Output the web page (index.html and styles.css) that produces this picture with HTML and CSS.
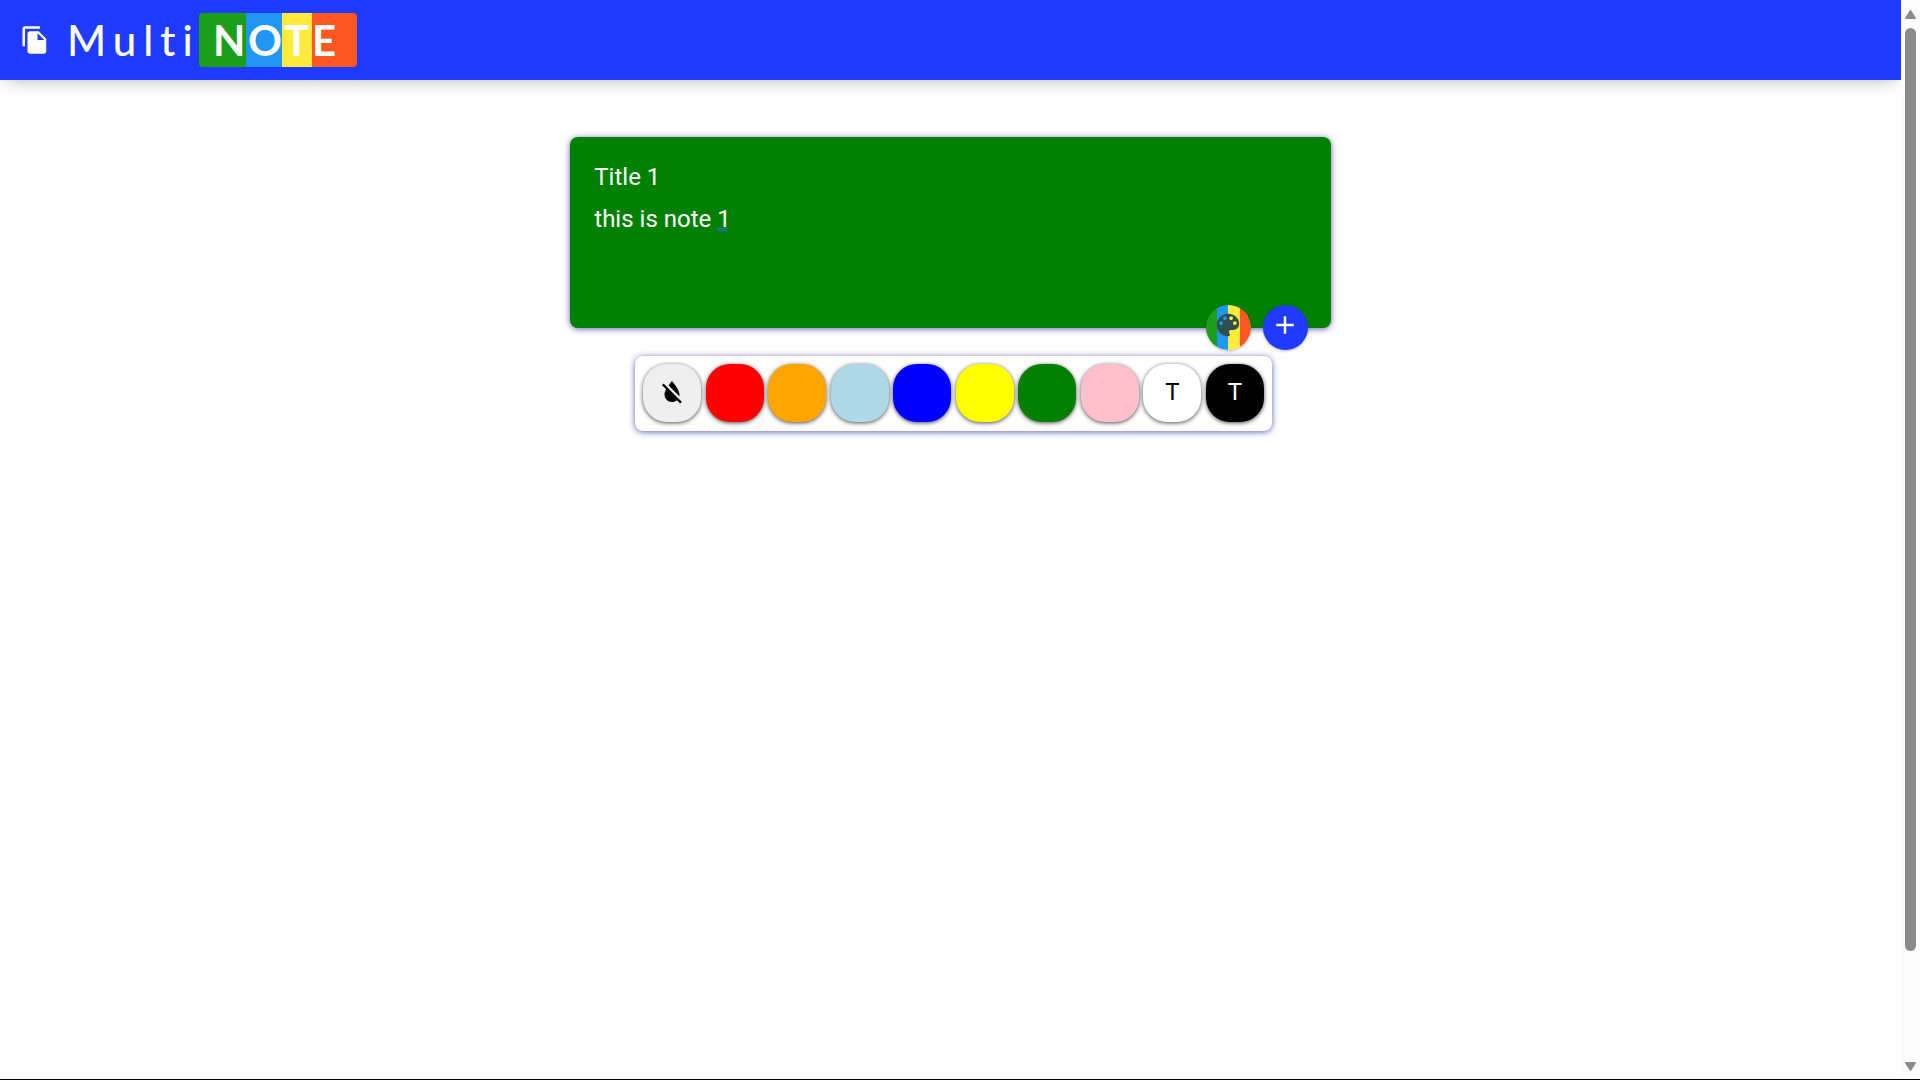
FILE: index.html
```
<!DOCTYPE html>
<html lang="en">
<head>
<meta charset="utf-8">
<title>MultiNOTE</title>
<link rel="stylesheet" href="styles.css">
</head>
<body>
<div class="window">
  <div class="page">
    <header class="header">
      <svg class="icon" viewBox="0 0 24 24" aria-hidden="true"><path d="M16 1H4c-1.1 0-2 .9-2 2v14h2V3h12V1zm-1 4l6 6v10c0 1.1-.9 2-2 2H7.99C6.89 23 6 22.1 6 21l.01-14c0-1.1.89-2 1.99-2h7zm-1 7h5.500L14 6.500V12z"/></svg>
      <h1 class="logo"><span class="logo-multi">Multi</span><span class="logo-note"><span class="letter letter-n">N</span><span class="letter letter-o">O</span><span class="letter letter-t">T</span><span class="letter letter-e">E</span></span></h1>
    </header>
    <main class="main">
      <form class="note">
        <input class="note-title" type="text" value="Title 1" aria-label="Title" spellcheck="false">
        <div class="note-body">
          <textarea class="note-text" aria-label="Note" rows="2" spellcheck="false">this is note 1</textarea>
          <span class="grammar-mark"></span>
        </div>
        <div class="note-actions">
          <button class="round round-palette" type="button" aria-label="Choose colour"><svg class="icon" viewBox="0 0 24 24" aria-hidden="true"><path d="M12 3c-4.970 0-9 4.030-9 9s4.030 9 9 9c.83 0 1.500-.67 1.500-1.500 0-.39-.15-.74-.39-1.010-.23-.26-.38-.61-.38-.99 0-.83.67-1.500 1.500-1.500H16c2.760 0 5-2.240 5-5 0-4.420-4.030-8-9-8zm-5.500 9c-.83 0-1.500-.67-1.500-1.500S5.670 9 6.500 9 8 9.670 8 10.500 7.330 12 6.500 12zm3-4C8.670 8 8 7.330 8 6.500S8.670 5 9.500 5s1.500.67 1.500 1.500S10.330 8 9.500 8zm5 0c-.83 0-1.500-.67-1.500-1.500S13.670 5 14.500 5s1.500.67 1.500 1.500S15.330 8 14.500 8zm3 4c-.83 0-1.500-.67-1.500-1.500S16.670 9 17.500 9s1.500.67 1.500 1.500-.67 1.500-1.500 1.500z"/></svg></button>
          <button class="round round-add" type="button" aria-label="Add note"><svg class="icon" viewBox="0 0 24 24" aria-hidden="true"><path d="M19 13h-6v6h-2v-6H5v-2h6V5h2v6h6v2z"/></svg></button>
        </div>
      </form>
      <div class="palette">
        <button class="swatch none" type="button" aria-label="No colour"><svg class="icon" viewBox="0 0 24 24" aria-hidden="true"><path d="M18 14c0-4-6-10.800-6-10.800s-1.330 1.510-2.730 3.520l8.590 8.590c.09-.42.14-.86.14-1.310zm-.88 3.120L12.500 12.500 5.270 5.270 4 6.550l3.320 3.320C6.550 11.320 6 12.790 6 14c0 3.310 2.690 6 6 6 1.520 0 2.900-.57 3.960-1.500l2.630 2.630 1.270-1.270-2.740-2.740z"/></svg></button>
        <button class="swatch red" type="button" aria-label="Red"></button>
        <button class="swatch orange" type="button" aria-label="Orange"></button>
        <button class="swatch lightblue" type="button" aria-label="Light blue"></button>
        <button class="swatch blue" type="button" aria-label="Blue"></button>
        <button class="swatch yellow" type="button" aria-label="Yellow"></button>
        <button class="swatch green" type="button" aria-label="Green"></button>
        <button class="swatch pink" type="button" aria-label="Pink"></button>
        <button class="swatch white" type="button">T</button>
        <button class="swatch black" type="button">T</button>
      </div>
    </main>
  </div>
  <div class="scrollbar" aria-hidden="true">
    <svg class="arrow" viewBox="0 0 11 9"><path d="M5.500 0Q6 0 6.500 1L11 8Q11 9 10 9H1Q0 9 0 8L4.500 1Q5 0 5.500 0z"/></svg>
    <div class="track"><div class="thumb"></div></div>
    <svg class="arrow arrow-down" viewBox="0 0 11 9"><path d="M5.500 0Q6 0 6.500 1L11 8Q11 9 10 9H1Q0 9 0 8L4.500 1Q5 0 5.500 0z"/></svg>
  </div>
</div>
</body>
</html>
```
FILE: styles.css
```
* {
  box-sizing: border-box;
}

body {
  margin: 0;
  background: #fff;
  font-family: Roboto, Arial, sans-serif;
  font-size: 24px;
}

button,
input,
textarea {
  border: 0;
  margin: 0;
  padding: 0;
  font: inherit;
}

button {
  cursor: pointer;
}

.window {
  display: flex;
  min-height: 100vh;
  border-bottom: 1px solid #000;
}

.page {
  flex: 1;
  overflow: hidden;
}

.icon {
  display: block;
  width: 30px;
  height: 30px;
  fill: currentColor;
}

.header {
  display: flex;
  align-items: center;
  gap: 17px;
  height: 80px;
  padding: 0 20px;
  background: #203bff;
  color: #fff;
  box-shadow: 0 6px 16px -6px rgba(0, 0, 0, 0.3);
}

.logo {
  display: flex;
  align-items: center;
  margin: 0;
  font-family: Lato, "Open Sans", sans-serif;
  font-size: 42px;
  font-weight: 500;
  line-height: 54px;
}

.logo-multi {
  letter-spacing: 7px;
  width: 132px;
}

.logo-note {
  display: flex;
  overflow: hidden;
  border-radius: 4px;
  font-weight: 700;
}

.letter-n {
  width: 47px;
  padding-left: 14px;
  background: #1b9f1b;
}

.letter-o {
  width: 36px;
  padding-left: 2px;
  background: #2196f3;
}

.letter-t {
  width: 30px;
  padding-left: 2px;
  background: #ffeb3b;
}

.letter-e {
  width: 45px;
  background: #ff5722;
}

.main {
  display: flex;
  flex-direction: column;
  align-items: center;
  gap: 28px;
  padding: 57px 0;
}

.note {
  position: relative;
  width: 40%;
  min-width: 320px;
  padding: 24px;
  border-radius: 8px;
  background: #008000;
  color: #fff;
  box-shadow: 0 1px 6px rgba(32, 32, 150, 0.7);
}

.note-title,
.note-text {
  display: block;
  width: 100%;
  background: transparent;
  color: inherit;
  outline: 0;
  resize: none;
}

.note-title {
  height: 32px;
}

.note-body {
  position: relative;
  padding-top: 12px;
}

.note-text {
  height: 99px;
  line-height: 28px;
}

.grammar-mark {
  position: absolute;
  left: 123px;
  top: 35px;
  width: 10px;
  height: 3px;
  border: solid #3367d6;
  border-width: 1px 0;
}

.note-actions {
  position: absolute;
  right: 23px;
  bottom: -22px;
  display: flex;
  gap: 12px;
}

.round {
  display: flex;
  align-items: center;
  justify-content: center;
  width: 45px;
  height: 45px;
  padding-bottom: 5px;
  border-radius: 50%;
  box-shadow: 0 1px 3px rgba(0, 0, 0, 0.3);
}

.round-palette {
  background: linear-gradient(90deg, #1b9f1b 11px, #2196f3 11px 22px, #ffeb3b 22px 34px, #ff5722 34px);
  color: #2f4f4f;
}

.round-add {
  background: #203bff;
  color: #fff;
}

.palette {
  display: flex;
  flex-wrap: wrap;
  justify-content: space-between;
  width: 637px;
  max-width: 100%;
  margin-left: 6px;
  padding: 8px 8px 9px;
  border-radius: 8px;
  box-shadow: 0 1px 6px rgba(32, 32, 150, 0.7);
}

.swatch {
  display: flex;
  align-items: center;
  justify-content: center;
  width: 58px;
  height: 58px;
  padding-bottom: 3px;
  border-radius: 24px;
  color: #000;
  box-shadow: 0 1px 4px rgba(0, 0, 0, 0.7);
}

.none { background: #efefef; }
.red { background: #f00; }
.orange { background: #ffa500; }
.lightblue { background: #add8e6; }
.blue { background: #00f; }
.yellow { background: #ff0; }
.green { background: #008000; }
.pink { background: #ffc0cb; }
.white { background: #fff; }

.black {
  background: #000;
  color: #fff;
}

.scrollbar {
  display: flex;
  flex-direction: column;
  align-items: center;
  width: 19px;
  padding: 10px 0 8px;
  background: #fcfcfc;
}

.arrow {
  width: 11px;
  height: 9px;
  fill: #8b8b8b;
}

.arrow-down {
  transform: rotate(180deg);
}

.track {
  flex: 1;
  width: 11px;
  padding: 9px 0;
}

.thumb {
  height: 90%;
  border-radius: 6px;
  background: #8b8b8b;
}
```
